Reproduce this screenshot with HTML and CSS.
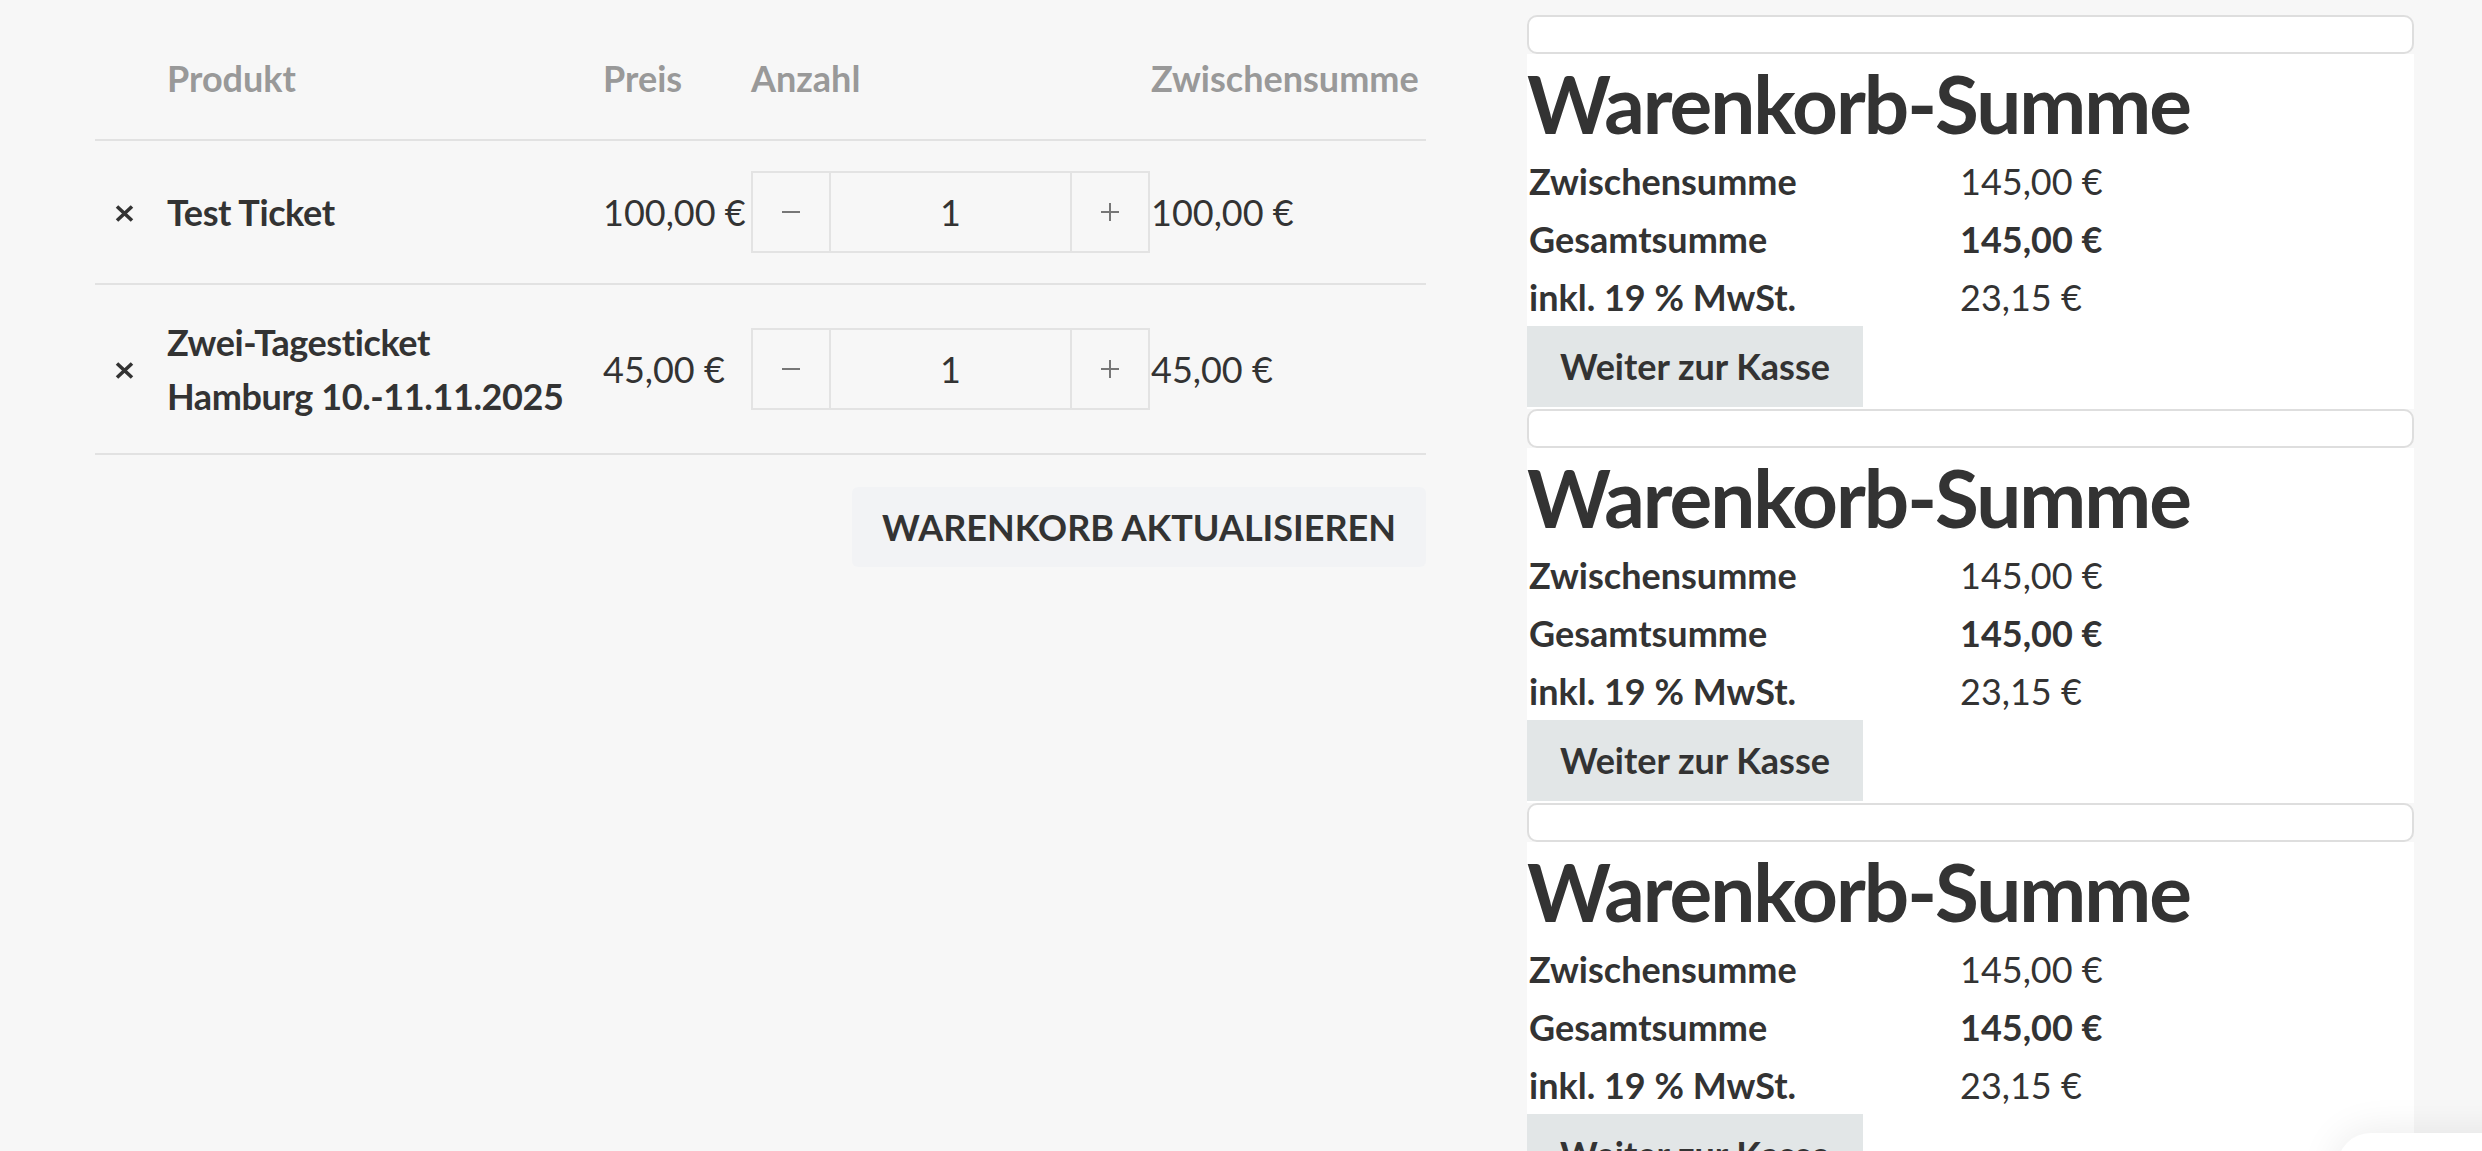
FILE: index.html
```html
<!DOCTYPE html>
<html lang="de">
<head>
<meta charset="utf-8">
<title>Warenkorb</title>
<link rel="stylesheet" href="styles.css">
</head>
<body>
<div class="page">
  <main class="cart">
    <table class="cart-table">
      <colgroup>
        <col class="c-remove"><col class="c-name"><col class="c-price"><col class="c-qty"><col class="c-sub">
      </colgroup>
      <thead>
        <tr><th></th><th>Produkt</th><th>Preis</th><th>Anzahl</th><th>Zwischensumme</th></tr>
      </thead>
      <tbody>
        <tr>
          <td class="remove"><svg class="x-icon" viewBox="0 0 19 17" width="19" height="17"><path d="M2 1.5 L17 15.5 M17 1.5 L2 15.5" stroke="#333" stroke-width="3.6" stroke-linecap="butt" fill="none"/></svg></td>
          <td class="name">Test Ticket</td>
          <td class="amount">100,00&nbsp;€</td>
          <td><div class="qty"><span class="step"><svg viewBox="0 0 18 18" width="18" height="18"><path d="M0 9 H18" stroke="#777" stroke-width="2"/></svg></span><span class="val">1</span><span class="step"><svg viewBox="0 0 18 18" width="18" height="18"><path d="M0 9 H18 M9 0 V18" stroke="#777" stroke-width="2"/></svg></span></div></td>
          <td class="amount">100,00&nbsp;€</td>
        </tr>
        <tr>
          <td class="remove"><svg class="x-icon" viewBox="0 0 19 17" width="19" height="17"><path d="M2 1.5 L17 15.5 M17 1.5 L2 15.5" stroke="#333" stroke-width="3.6" stroke-linecap="butt" fill="none"/></svg></td>
          <td class="name">Zwei-Tagesticket Hamburg 10.-11.11.2025</td>
          <td class="amount">45,00&nbsp;€</td>
          <td><div class="qty"><span class="step"><svg viewBox="0 0 18 18" width="18" height="18"><path d="M0 9 H18" stroke="#777" stroke-width="2"/></svg></span><span class="val">1</span><span class="step"><svg viewBox="0 0 18 18" width="18" height="18"><path d="M0 9 H18 M9 0 V18" stroke="#777" stroke-width="2"/></svg></span></div></td>
          <td class="amount">45,00&nbsp;€</td>
        </tr>
      </tbody>
    </table>
    <div class="actions"><button class="update" type="button">Warenkorb aktualisieren</button></div>
  </main>

  <aside class="totals-col">
    <section class="totals">
      <div class="notice"></div>
      <div class="totals-body">
        <h2>Warenkorb-Summe</h2>
        <table class="totals-table">
          <tr><th>Zwischensumme</th><td>145,00&nbsp;€</td></tr>
          <tr><th>Gesamtsumme</th><td class="strong">145,00&nbsp;€</td></tr>
          <tr><th>inkl. 19 % MwSt.</th><td>23,15&nbsp;€</td></tr>
        </table>
        <a class="checkout" href="#">Weiter zur Kasse</a>
      </div>
    </section>
    <section class="totals">
      <div class="notice"></div>
      <div class="totals-body">
        <h2>Warenkorb-Summe</h2>
        <table class="totals-table">
          <tr><th>Zwischensumme</th><td>145,00&nbsp;€</td></tr>
          <tr><th>Gesamtsumme</th><td class="strong">145,00&nbsp;€</td></tr>
          <tr><th>inkl. 19 % MwSt.</th><td>23,15&nbsp;€</td></tr>
        </table>
        <a class="checkout" href="#">Weiter zur Kasse</a>
      </div>
    </section>
    <section class="totals">
      <div class="notice"></div>
      <div class="totals-body">
        <h2>Warenkorb-Summe</h2>
        <table class="totals-table">
          <tr><th>Zwischensumme</th><td>145,00&nbsp;€</td></tr>
          <tr><th>Gesamtsumme</th><td class="strong">145,00&nbsp;€</td></tr>
          <tr><th>inkl. 19 % MwSt.</th><td>23,15&nbsp;€</td></tr>
        </table>
        <a class="checkout" href="#">Weiter zur Kasse</a>
      </div>
    </section>
  </aside>
</div>
<div class="float-widget"></div>
</body>
</html>
```

FILE: styles.css
```css
html, body {
  margin: 0;
  padding: 0;
  overflow: hidden;
}

body {
  background: #f7f7f7;
  color: #333;
  font-family: Lato, "Noto Sans", sans-serif;
  font-size: 36px;
  line-height: 54px;
}

.page {
  display: flex;
  gap: 101px;
  padding: 15px 68px 0 95px;
  align-items: flex-start;
}

.cart {
  width: 1331px;
  flex: none;
}

.cart-table {
  width: 100%;
  table-layout: fixed;
  border-collapse: separate;
  border-spacing: 0;
}

.c-remove { width: 72px; }
.c-name { width: 436px; }
.c-price { width: 148px; }
.c-qty { width: 400px; }
.c-sub { width: 275px; }

.cart-table th {
  text-align: left;
  color: #999;
  font-weight: 700;
  padding: 36px 0 34px;
  line-height: 54px;
  border-bottom: 2px solid #e2e2e2;
  white-space: nowrap;
}

.cart-table td {
  padding: 30px 0;
  line-height: 54px;
  vertical-align: middle;
  border-bottom: 2px solid #e2e2e2;
}

.cart-table .remove {
  padding-left: 20px;
}

.x-icon {
  display: block;
  margin-top: 3px;
}

.cart-table .name {
  font-weight: 700;
  padding-right: 24px;
  letter-spacing: -0.4px;
}

.cart-table .amount {
  white-space: nowrap;
}

.qty {
  display: flex;
  width: 399px;
  height: 82px;
  box-sizing: border-box;
  border: 2px solid #e3e3e3;
}

.qty .step {
  width: 76px;
  display: flex;
  align-items: center;
  justify-content: center;
}

.qty .step svg {
  display: block;
}

.qty .val {
  flex: 1;
  text-align: center;
  line-height: 78px;
  border-left: 2px solid #e3e3e3;
  border-right: 2px solid #e3e3e3;
}

.actions {
  display: flex;
  justify-content: flex-end;
  margin-top: 32px;
}

.update {
  font: inherit;
  font-weight: 700;
  text-transform: uppercase;
  color: #333;
  background: #f2f3f5;
  border: 0;
  border-radius: 6px;
  padding: 13px 30px;
  line-height: 54px;
}

.totals-col {
  width: 887px;
  flex: none;
}

.notice {
  height: 39px;
  box-sizing: border-box;
  border: 2px solid #dedede;
  border-radius: 10px;
  background: #fff;
}

.totals-body {
  background: #fff;
  padding-bottom: 2px;
}

.totals-body h2 {
  margin: 0;
  font-size: 80px;
  line-height: 98px;
  font-weight: 700;
  letter-spacing: -2px;
}

.totals-table {
  border-collapse: collapse;
}

.totals-table th {
  width: 431px;
  padding: 0 0 0 2px;
  text-align: left;
  font-weight: 700;
  height: 58px;
  line-height: 58px;
  white-space: nowrap;
}

.totals-table td {
  padding: 0;
  height: 58px;
  line-height: 58px;
  white-space: nowrap;
}

.totals-table .strong {
  font-weight: 700;
}

.checkout {
  display: inline-block;
  background: #e2e6e7;
  color: #333;
  text-decoration: none;
  font-weight: 700;
  padding: 13px 33px;
  line-height: 55px;
}

.float-widget {
  position: fixed;
  left: 2337px;
  top: 1133px;
  width: 260px;
  height: 120px;
  border-radius: 34px;
  background: #fff;
  box-shadow: 0 0 40px rgba(0, 0, 0, 0.09);
}
```
